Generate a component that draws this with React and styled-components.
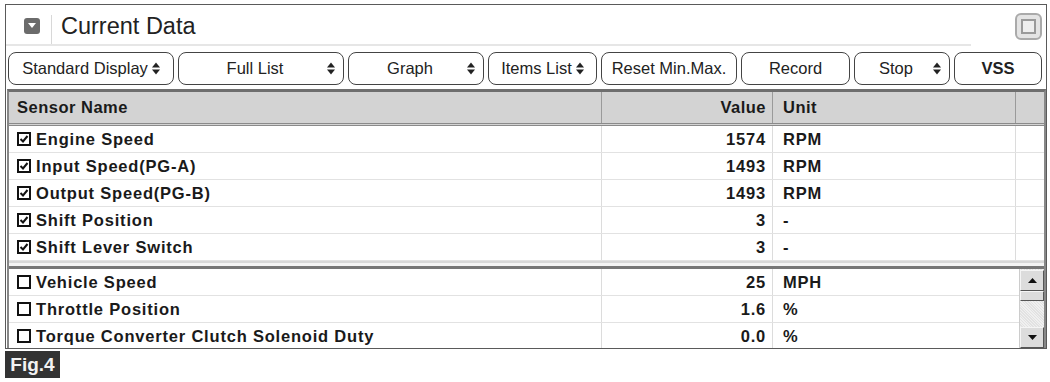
import React from 'react';
import styled, {createGlobalStyle} from 'styled-components';

const GlobalStyle = createGlobalStyle`
  body {
    margin: 0;
    background: #fff;
    font-family: "Liberation Sans", Arial, sans-serif;
    color: #111;
  }
`;

const Page = styled.div`
  width: 1050px;
  height: 382px;
  padding: 4px 0 0 5px;
  box-sizing: border-box;
`;

const Frame = styled.div`
  width: 1042px;
  height: 345px;
  border: 1px solid #5a5a5a;
  box-sizing: border-box;
  overflow: hidden;
  display: flex;
  flex-direction: column;
`;

const TitleBar = styled.div`
  display: flex;
  align-items: stretch;
  height: 41px;
  flex: none;
`;

const TitleMain = styled.div`
  width: 965px;
  display: flex;
  align-items: center;
  border-bottom: 2px solid #e6e6e6;
  box-sizing: border-box;
`;

const CollapseIcon = styled.div`
  width: 16px;
  height: 16px;
  margin: 2px 11px 0 18px;
  border-radius: 3px;
  background: #6b6b6b;
  display: flex;
  align-items: center;
  justify-content: center;
`;

const Divider = styled.div`
  width: 1px;
  align-self: stretch;
  margin: 10px 0 0;
  background: #d8d8d8;
`;

const Title = styled.div`
  font-size: 23.5px;
  margin-left: 9px;
  margin-top: 4px;
  color: #222;
`;

const TitleSide = styled.div`
  flex: 1;
  display: flex;
  justify-content: flex-end;
  padding: 8px 4px 0 0;
`;

const MaxBox = styled.div`
  width: 27px;
  height: 27px;
  box-sizing: border-box;
  border-radius: 6px;
  border: 2px solid #aaa;
  background: #e4e4e4;
  display: flex;
  align-items: center;
  justify-content: center;
  span {
    width: 15px;
    height: 15px;
    border: 2px solid #9a9a9a;
    background: #eee;
    box-sizing: border-box;
  }
`;

const Toolbar = styled.div`
  display: flex;
  gap: 4px;
  padding: 6px 3px 4px 2px;
  flex: none;
`;

const Button = styled.div`
  width: ${p => p.w}px;
  height: 33px;
  box-sizing: border-box;
  border: 1px solid #444;
  border-radius: 8px;
  display: flex;
  align-items: center;
  justify-content: ${p => (p.tight ? 'center' : 'space-between')};
  padding: 0 ${p => (p.tight ? 5 : 8)}px 1px;
  gap: 4px;
  font-size: 16.5px;
  color: #222;
  flex: none;
  white-space: nowrap;
`;

const ButtonLabel = styled.span`
  flex: ${p => (p.grow ? 1 : 'none')};
  text-align: center;
  font-weight: ${p => (p.bold ? 'bold' : 'normal')};
`;

const Table = styled.div`
  margin: 0 0 0 1px;
  width: 1035px;
  border-top: 3px solid #6e6e6e;
  border-left: 2px solid #888;
  border-right: 2px solid #888;
  flex: 1;
  display: flex;
  flex-direction: column;
  overflow: hidden;
`;

const Row = styled.div`
  display: grid;
  grid-template-columns: 593px 171px 243px 1fr;
  height: ${p => (p.head ? 34 : 27)}px;
  flex: none;
  background: ${p => (p.head ? '#d3d3d3' : '#fff')};
  border-bottom: ${p => (p.head ? '3px double #8a8a8a' : '1px solid #e2e2e2')};
  box-sizing: border-box;
`;

const Cell = styled.div`
  display: flex;
  align-items: center;
  justify-content: ${p => (p.right ? 'flex-end' : 'flex-start')};
  padding: ${p => (p.right ? '0 6px 0 0' : p.unit ? '0 0 0 10px' : '0 0 0 8px')};
  border-right: 1px solid ${p => (p.head ? '#9a9a9a' : '#dcdcdc')};
  font-size: 16.5px;
  font-weight: bold;
  letter-spacing: ${p => (p.head ? 0.5 : 0.8)}px;
  color: #1a1a1a;
  white-space: nowrap;
  overflow: hidden;
  &:last-child {
    border-right: none;
  }
`;

const Check = styled.span`
  width: 14px;
  height: 14px;
  box-sizing: border-box;
  border: 2px solid #111;
  margin-right: 5px;
  display: inline-flex;
  align-items: center;
  justify-content: center;
  flex: none;
`;

const SectionBreak = styled.div`
  height: 8px;
  flex: none;
  border-top: 2px solid #d8d8d8;
  border-bottom: 3px solid #777;
  background: #f4f4f4;
  box-sizing: border-box;
`;

const Lower = styled.div`
  display: grid;
  grid-template-columns: 1fr 25px;
  flex: 1;
  overflow: hidden;
`;

const LowerRows = styled.div`
  overflow: hidden;
`;

const LowerRow = styled(Row)`
  grid-template-columns: 593px 171px 1fr;
`;

const ScrollBar = styled.div`
  display: flex;
  flex-direction: column;
  background: repeating-linear-gradient(45deg, #e2e2e2 0 1px, #f0f0f0 1px 2px);
  border-left: 1px solid #ccc;
`;

const ScrollButton = styled.div`
  height: ${p => p.h}px;
  box-sizing: border-box;
  background: #dcdcdc;
  border: 1px solid #f5f5f5;
  border-right-color: #555;
  border-bottom-color: #555;
  display: flex;
  align-items: center;
  justify-content: center;
  margin-top: ${p => p.top || 0}px;
  flex: none;
`;

const ScrollTrack = styled.div`
  flex: 1;
`;

const FigLabel = styled.div`
  margin-top: 2px;
  width: 55px;
  height: 27px;
  background: #333;
  color: #f2f2f2;
  font-weight: bold;
  font-size: 19px;
  display: flex;
  align-items: center;
  justify-content: center;
`;

function SortArrows() {
    return (
        <svg width="8" height="13" viewBox="0 0 8 13">
            <path d="M0 5.5 L4 0.5 L8 5.5 Z" fill="#222"/>
            <path d="M0 7.5 L4 12.5 L8 7.5 Z" fill="#222"/>
        </svg>
    );
}

const buttons = [
    {label: 'Standard Display', w: 166, arrow: true, tight: true},
    {label: 'Full List', w: 166, arrow: true},
    {label: 'Graph', w: 136, arrow: true},
    {label: 'Items List', w: 109, arrow: true, tight: true},
    {label: 'Reset Min.Max.', w: 136, tight: true},
    {label: 'Record', w: 109, tight: true},
    {label: 'Stop', w: 96, arrow: true},
    {label: 'VSS', w: 88, tight: true, bold: true},
];

const upper = [
    ['Engine Speed', '1574', 'RPM'],
    ['Input Speed(PG-A)', '1493', 'RPM'],
    ['Output Speed(PG-B)', '1493', 'RPM'],
    ['Shift Position', '3', '-'],
    ['Shift Lever Switch', '3', '-'],
];

const lower = [
    ['Vehicle Speed', '25', 'MPH'],
    ['Throttle Position', '1.6', '%'],
    ['Torque Converter Clutch Solenoid Duty', '0.0', '%'],
];

function CheckBox({checked}) {
    return (
        <Check>
            {checked && (
                <svg width="10" height="10" viewBox="0 0 10 10">
                    <path d="M1.5 5 L4 7.5 L8.5 2" stroke="#111" strokeWidth="2" fill="none"/>
                </svg>
            )}
        </Check>
    );
}

export default function App() {
    return (
        <Page>
            <GlobalStyle/>
            <Frame>
                <TitleBar>
                    <TitleMain>
                        <CollapseIcon>
                            <svg width="8" height="5" viewBox="0 0 8 5"><path d="M0 0 H8 L4 5 Z" fill="#fff"/></svg>
                        </CollapseIcon>
                        <Divider/>
                        <Title>Current Data</Title>
                    </TitleMain>
                    <TitleSide>
                        <MaxBox><span/></MaxBox>
                    </TitleSide>
                </TitleBar>
                <Toolbar>
                    {buttons.map(b => (
                        <Button key={b.label} w={b.w} tight={b.tight}>
                            <ButtonLabel grow={!b.tight} bold={b.bold}>{b.label}</ButtonLabel>
                            {b.arrow && <SortArrows/>}
                        </Button>
                    ))}
                </Toolbar>
                <Table>
                    <Row head>
                        <Cell head>Sensor Name</Cell>
                        <Cell head right>Value</Cell>
                        <Cell head unit>Unit</Cell>
                        <Cell head/>
                    </Row>
                    {upper.map(([name, value, unit]) => (
                        <Row key={name}>
                            <Cell><CheckBox checked/>{name}</Cell>
                            <Cell right>{value}</Cell>
                            <Cell unit>{unit}</Cell>
                            <Cell/>
                        </Row>
                    ))}
                    <SectionBreak/>
                    <Lower>
                        <LowerRows>
                            {lower.map(([name, value, unit]) => (
                                <LowerRow key={name}>
                                    <Cell><CheckBox/>{name}</Cell>
                                    <Cell right>{value}</Cell>
                                    <Cell unit>{unit}</Cell>
                                </LowerRow>
                            ))}
                        </LowerRows>
                        <ScrollBar>
                            <ScrollButton h={21} top={1}>
                                <svg width="9" height="5" viewBox="0 0 9 5"><path d="M0 5 L4.5 0 L9 5 Z" fill="#111"/></svg>
                            </ScrollButton>
                            <ScrollButton h={10}/>
                            <ScrollTrack/>
                            <ScrollButton h={21}>
                                <svg width="9" height="5" viewBox="0 0 9 5"><path d="M0 0 H9 L4.5 5 Z" fill="#111"/></svg>
                            </ScrollButton>
                        </ScrollBar>
                    </Lower>
                </Table>
            </Frame>
            <FigLabel>Fig.4</FigLabel>
        </Page>
    );
}
